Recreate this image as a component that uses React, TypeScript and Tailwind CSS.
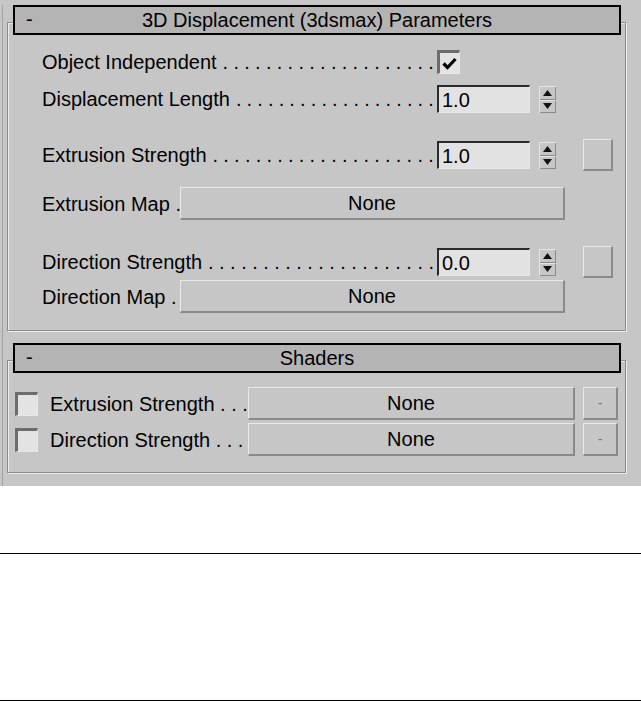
import React from 'react';

const font = "font-['Liberation_Sans',Arial,sans-serif]";

// dot leader spread evenly between the label and the control
function Dots({ n }: { n: number }) {
  return (
    <div className="flex-1 min-w-0 ml-[6px] mr-[3px] flex justify-between">
      {Array.from({ length: n }, (_, i) => (
        <span key={i}>.</span>
      ))}
    </div>
  );
}

function Spinner() {
  return (
    <div className="ml-[9px] w-[17px] h-[27px] flex flex-col border-l border-t border-[#e6e6e6]">
      <div className="h-[13px] flex items-center justify-center border-b border-r border-[#8a8a8a]">
        <svg width="9" height="6" viewBox="0 0 9 6"><path d="M0 6 L4.5 0 L9 6 Z" fill="#111" /></svg>
      </div>
      <div className="flex-1 flex items-center justify-center border-r border-b border-[#8a8a8a] border-t border-t-[#e6e6e6]">
        <svg width="9" height="6" viewBox="0 0 9 6"><path d="M0 0 L9 0 L4.5 6 Z" fill="#111" /></svg>
      </div>
    </div>
  );
}

function NumField({ value }: { value: string }) {
  return (
    <div className="w-[93px] h-[28px] bg-[#e2e2e2] border-t-2 border-l-2 border-[#2a2a2a] border-r border-b border-r-[#e8e8e8] border-b-[#e8e8e8] flex items-center pl-[3px] leading-none">
      {value}
    </div>
  );
}

function Btn({ className, children }: { className: string; children?: React.ReactNode }) {
  return (
    <div className={`flex items-center justify-center bg-[#c6c6c6] border-t border-l border-[#e8e8e8] border-r-2 border-b-2 border-r-[#8a8a8a] border-b-[#8a8a8a] ${className}`}>
      {children}
    </div>
  );
}

function Check({ checked }: { checked?: boolean }) {
  return (
    <div className="w-[23px] h-[24px] bg-[#e3e3e3] border-t-[3px] border-l-[3px] border-[#6c6c6c] border-r border-b border-r-[#e8e8e8] border-b-[#e8e8e8] flex items-center justify-center">
      {checked && (
        <svg width="15" height="13" viewBox="0 0 15 13">
          <path d="M1.5 6.5 L5.5 10.5 L13.5 2" stroke="#000" strokeWidth="3.2" fill="none" />
        </svg>
      )}
    </div>
  );
}

function Rollout({ title, children }: { title: string; children: React.ReactNode }) {
  return (
    <div>
      <div className="relative z-10 ml-[10px] w-[608px] h-[30px] border-2 border-black bg-[#b4b4b4] grid grid-cols-[40px_1fr_40px] items-center leading-none">
        <span className="pl-[11px] -mt-[2px]">-</span>
        <span className="text-center">{title}</span>
        <span />
      </div>
      <div className="-mt-[13px] ml-[4px] w-[619px] border border-[#8c8c8c] shadow-[inset_1px_1px_0_#ececec,1px_1px_0_#ececec]">
        {children}
      </div>
    </div>
  );
}

function Label({ text, n }: { text: string; n: number }) {
  return (
    <div className="w-[395px] flex items-center">
      <span className="whitespace-nowrap">{text}</span>
      <Dots n={n} />
    </div>
  );
}

export default function App() {
  return (
    <div className={`w-[641px] h-[701px] bg-white text-[20px] text-black ${font}`}>
      {/* max panel */}
      <div className="bg-[#c6c6c6] h-[486px] pt-[5px]">
        <div className="ml-[2px] h-full border-l border-[#a4a4a4]">
          <Rollout title="3D Displacement (3dsmax) Parameters">
            <div className="pl-[34px] pb-[17px]">
              <div className="mt-[25px] h-[28px] flex items-center">
                <Label text="Object Independent" n={20} />
                <Check checked />
              </div>
              <div className="mt-[9px] h-[28px] flex items-center">
                <Label text="Displacement Length" n={19} />
                <NumField value="1.0" />
                <Spinner />
              </div>
              <div className="mt-[26px] h-[32px] flex items-center">
                <Label text="Extrusion Strength" n={21} />
                <NumField value="1.0" />
                <Spinner />
                <Btn className="ml-[27px] w-[30px] h-[32px]" />
              </div>
              <div className="mt-[16px] h-[33px] flex items-center">
                <span className="w-[138px] whitespace-nowrap">Extrusion Map .</span>
                <Btn className="w-[385px] h-[33px]">None</Btn>
              </div>
              <div className="mt-[26px] h-[32px] flex items-center">
                <Label text="Direction Strength" n={21} />
                <NumField value="0.0" />
                <Spinner />
                <Btn className="ml-[27px] w-[30px] h-[32px]" />
              </div>
              <div className="mt-[2px] h-[33px] flex items-center">
                <span className="w-[138px] whitespace-nowrap">Direction Map .</span>
                <Btn className="w-[385px] h-[33px]">None</Btn>
              </div>
            </div>
          </Rollout>

          <div className="mt-[12px]">
            <Rollout title="Shaders">
              <div className="pl-[7px] pb-[16px]">
                <div className="mt-[26px] h-[33px] flex items-center">
                  <Check />
                  <span className="ml-[12px] w-[198px] whitespace-nowrap">Extrusion Strength . . .</span>
                  <Btn className="w-[327px] h-[33px]">None</Btn>
                  <Btn className="ml-[8px] w-[35px] h-[33px] text-[14px] text-[#777]">-</Btn>
                </div>
                <div className="mt-[3px] h-[33px] flex items-center">
                  <Check />
                  <span className="ml-[12px] w-[198px] whitespace-nowrap">Direction Strength . . .</span>
                  <Btn className="w-[327px] h-[33px]">None</Btn>
                  <Btn className="ml-[8px] w-[35px] h-[33px] text-[14px] text-[#777]">-</Btn>
                </div>
              </div>
            </Rollout>
          </div>
        </div>
      </div>

      {/* page rules below the panel */}
      <div className="mt-[67px] h-px bg-black" />
      <div className="mt-[146px] h-px bg-black" />
    </div>
  );
}
